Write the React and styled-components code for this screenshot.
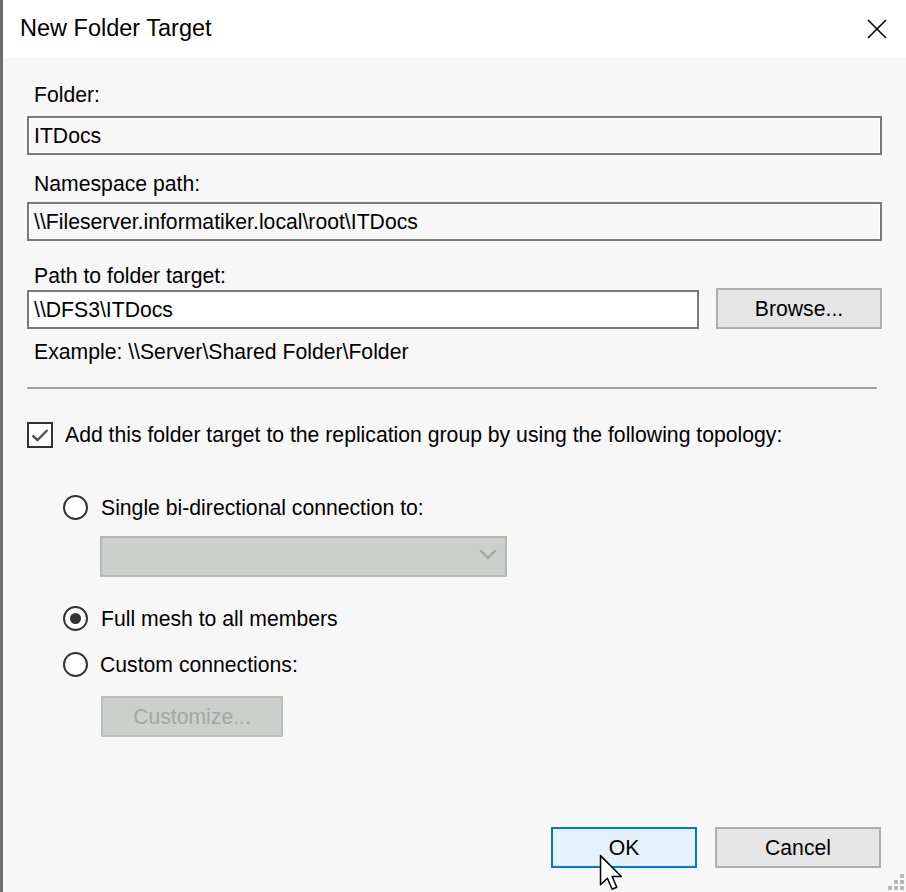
import React from 'react'
import styled, { createGlobalStyle } from 'styled-components'

const Global = createGlobalStyle`
  html, body {
    margin: 0;
    padding: 0;
    background: #f7f7f7;
  }
  * {
    box-sizing: border-box;
  }
`

const Window = styled.div`
  position: relative;
  width: 906px;
  height: 892px;
  display: flex;
  flex-direction: column;
  border-left: 3px solid #6d6d6d;
  background: #f7f7f7;
  font-family: "Liberation Sans", Arial, sans-serif;
  font-size: 21.2px;
  color: #000;
  overflow: hidden;
`

const TitleBar = styled.div`
  height: 58px;
  flex: none;
  background: #fff;
  display: flex;
  align-items: center;
  justify-content: space-between;
  padding: 0 18px 0 17px;
`

const Title = styled.div`
  font-size: 23.5px;
  padding-bottom: 2px;
`

const Body = styled.div`
  flex: 1;
  display: flex;
  flex-direction: column;
  padding: 0 24px;
`

const Label = styled.div`
  line-height: 24px;
  padding-left: 7px;
  margin-top: ${p => p.$top}px;
`

const TextBox = styled.div`
  height: 39px;
  margin-top: ${p => p.$top || 0}px;
  flex: ${p => (p.$grow ? 1 : 'none')};
  border: 2px solid #7a7a7a;
  background: ${p => (p.$readOnly ? '#f7f7f7' : '#fff')};
  box-shadow: ${p => (p.$readOnly ? 'inset 0 0 0 1px #fff' : 'none')};
  display: flex;
  align-items: center;
  padding-left: 5px;
  white-space: nowrap;
`

const Row = styled.div`
  display: flex;
  align-items: ${p => p.$align || 'center'};
  gap: ${p => p.$gap || 0}px;
  margin-top: ${p => p.$top || 0}px;
  margin-left: ${p => p.$indent || 0}px;
`

const Button = styled.div`
  width: ${p => p.$w}px;
  height: 41px;
  flex: none;
  display: flex;
  align-items: center;
  justify-content: center;
  border: 2px solid ${p => (p.$primary ? '#0078d7' : p.$disabled ? '#bbbdbb' : '#adadad')};
  background: ${p => (p.$primary ? '#e5f1fb' : p.$disabled ? '#ccd0cc' : '#e5e5e5')};
  color: ${p => (p.$disabled ? '#a3a6a3' : '#000')};
  margin-top: ${p => p.$top || 0}px;
  margin-left: ${p => p.$left || 0}px;
`

const Separator = styled.div`
  height: 2px;
  background: #a0a0a0;
  margin: 23px 5px 0 0;
`

const CheckBox = styled.div`
  width: 26px;
  height: 26px;
  flex: none;
  border: 2px solid #333;
  background: #fff;
  display: flex;
  align-items: center;
  justify-content: center;
`

const Radio = styled.div`
  width: 25px;
  height: 25px;
  flex: none;
  border-radius: 50%;
  border: 2px solid #333;
  background: #fff;
  display: flex;
  align-items: center;
  justify-content: center;

  &::after {
    content: '';
    display: ${p => (p.$checked ? 'block' : 'none')};
    width: 11px;
    height: 11px;
    border-radius: 50%;
    background: #333;
  }
`

const RowText = styled.span`
  line-height: 24px;
  white-space: nowrap;
`

const Select = styled.div`
  width: 407px;
  height: 41px;
  margin: 16px 0 0 73px;
  border: 2px solid #b5b8b5;
  background: #ccd0cc;
  display: flex;
  align-items: center;
  justify-content: flex-end;
  padding: 0 8px 4px 0;
`

const Footer = styled.div`
  margin-top: auto;
  padding: 0 1px 24px 0;
  display: flex;
  justify-content: flex-end;
  gap: 18px;
`

const Cursor = styled.svg`
  position: absolute;
  left: 596px;
  top: 854px;
`

const Grip = styled.svg`
  position: absolute;
  right: 0;
  bottom: 0;
`

const App = () => {
  return (
    <>
      <Global />
      <Window>
        <TitleBar>
          <Title>New Folder Target</Title>
          <svg width="22" height="22" viewBox="0 0 22 22">
            <path d="M2 2 L20 20 M20 2 L2 20" stroke="#000" strokeWidth="1.6" fill="none" />
          </svg>
        </TitleBar>

        <Body>
          <Label $top={25}>Folder:</Label>
          <TextBox $top={9} $readOnly>ITDocs</TextBox>

          <Label $top={17}>Namespace path:</Label>
          <TextBox $top={6} $readOnly>\\Fileserver.informatiker.local\root\ITDocs</TextBox>

          <Label $top={23}>Path to folder target:</Label>
          <Row $align="flex-end" $gap={17}>
            <TextBox $grow>\\DFS3\ITDocs</TextBox>
            <Button $w={166}>Browse...</Button>
          </Row>
          <Label $top={11}>Example: \\Server\Shared Folder\Folder</Label>

          <Separator />

          <Row $top={33} $gap={12}>
            <CheckBox>
              <svg width="20" height="20" viewBox="0 0 20 20">
                <path d="M2.5 10.5 L7.5 15 L17.5 5" stroke="#555" strokeWidth="2.4" fill="none" />
              </svg>
            </CheckBox>
            <RowText>Add this folder target to the replication group by using the following topology:</RowText>
          </Row>

          <Row $top={47} $indent={36} $gap={13}>
            <Radio />
            <RowText>Single bi-directional connection to:</RowText>
          </Row>
          <Select>
            <svg width="18" height="11" viewBox="0 0 18 11">
              <path d="M1 1 L9 9 L17 1" stroke="#a0a2a0" strokeWidth="2" fill="none" />
            </svg>
          </Select>

          <Row $top={29} $indent={36} $gap={13}>
            <Radio $checked />
            <RowText>Full mesh to all members</RowText>
          </Row>
          <Row $top={21} $indent={36} $gap={12}>
            <Radio />
            <RowText>Custom connections:</RowText>
          </Row>
          <Button $w={182} $top={19} $left={74} $disabled>Customize...</Button>

          <Footer>
            <Button $w={146} $primary>OK</Button>
            <Button $w={166}>Cancel</Button>
          </Footer>
        </Body>

        <Cursor width="26" height="40" viewBox="0 0 17 26">
          <path
            d="M1 1 L1 20 L5.5 15.8 L8.6 23 L11.6 21.7 L8.6 14.6 L14.6 14.6 Z"
            fill="#fff"
            stroke="#000"
            strokeWidth="1"
            strokeLinejoin="round"
          />
        </Cursor>

        <Grip width="20" height="20" viewBox="0 0 20 20">
          {[[14, 2], [8, 8], [14, 8], [2, 14], [8, 14], [14, 14]].map(([x, y]) => (
            <rect key={`${x}-${y}`} x={x} y={y} width="4" height="4" fill="#b8b8b8" />
          ))}
        </Grip>
      </Window>
    </>
  )
}

export default App
